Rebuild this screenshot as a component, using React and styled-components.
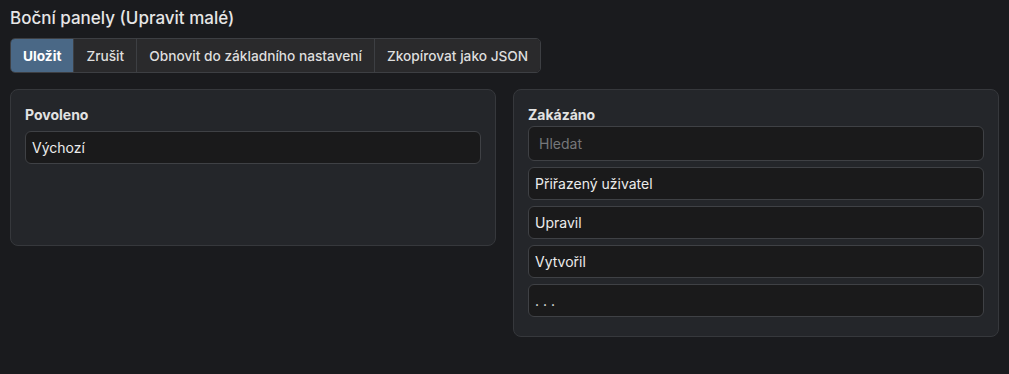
import React from "react";
import styled, { createGlobalStyle } from "styled-components";

const Global = createGlobalStyle`
  html, body { margin: 0; padding: 0; background: #1a1b1e; }
  body { font-family: Inter, "Noto Sans", sans-serif; color: #e4e4e4; }
`;

const Page = styled.div`
  padding: 4px 10px 10px 10px;
`;

const Title = styled.h1`
  margin: 0;
  font-size: 17px;
  font-weight: 500;
  line-height: 28px;
  color: #e6e6e6;
`;

const ButtonGroup = styled.div`
  display: inline-flex;
  margin-top: 6px;
  border: 1px solid #3d3f43;
  border-radius: 5px;
  overflow: hidden;
`;

const GroupButton = styled.button`
  font-family: inherit;
  font-size: 13.7px;
  font-weight: ${(p) => (p.$primary ? 700 : 500)};
  height: 33px;
  padding: 0 12px;
  border: none;
  border-left: ${(p) => (p.$first ? "none" : "1px solid #3d3f43")};
  background: ${(p) => (p.$primary ? "#4a6886" : "#2a2a2c")};
  color: ${(p) => (p.$primary ? "#ffffff" : "#dedede")};
  cursor: pointer;
`;

const Columns = styled.div`
  display: grid;
  grid-template-columns: 1fr 1fr;
  gap: 17px;
  align-items: start;
  margin-top: 16px;
`;

const Panel = styled.div`
  background: #24262a;
  border: 1px solid #36383c;
  border-radius: 8px;
  padding: 15px 14px 19px 14px;
  min-height: ${(p) => p.$minHeight || 0}px;
  box-sizing: border-box;
`;

const Label = styled.div`
  font-size: 14px;
  font-weight: 700;
  line-height: 20px;
  color: #e2e2e2;
`;

const List = styled.div`
  display: flex;
  flex-direction: column;
  gap: 6px;
  margin-top: ${(p) => p.$offset}px;
`;

const Item = styled.div`
  height: 33px;
  box-sizing: border-box;
  background: #1a1a1b;
  border: 1px solid #3f4145;
  border-radius: 6px;
  padding: 0 6px;
  display: flex;
  align-items: center;
  font-size: 14px;
  color: #ececec;
`;

const Search = styled.input`
  height: 35px;
  box-sizing: border-box;
  width: 100%;
  background: #1a1a1b;
  border: 1px solid #3f4145;
  border-radius: 6px;
  padding: 0 10px;
  font-family: inherit;
  font-size: 14px;
  color: #ececec;
  outline: none;
  &::placeholder { color: #76777a; }
`;

export default function App() {
  return (
    <Page>
      <Global />
      <Title>Boční panely (Upravit malé)</Title>
      <ButtonGroup>
        <GroupButton $primary $first>Uložit</GroupButton>
        <GroupButton>Zrušit</GroupButton>
        <GroupButton>Obnovit do základního nastavení</GroupButton>
        <GroupButton>Zkopírovat jako JSON</GroupButton>
      </ButtonGroup>
      <Columns>
        <Panel $minHeight={157}>
          <Label>Povoleno</Label>
          <List $offset={6}>
            <Item>Výchozí</Item>
          </List>
        </Panel>
        <Panel>
          <Label>Zakázáno</Label>
          <List $offset={1}>
            <Search placeholder="Hledat" />
            <Item>Přiřazený uživatel</Item>
            <Item>Upravil</Item>
            <Item>Vytvořil</Item>
            <Item>. . .</Item>
          </List>
        </Panel>
      </Columns>
    </Page>
  );
}
